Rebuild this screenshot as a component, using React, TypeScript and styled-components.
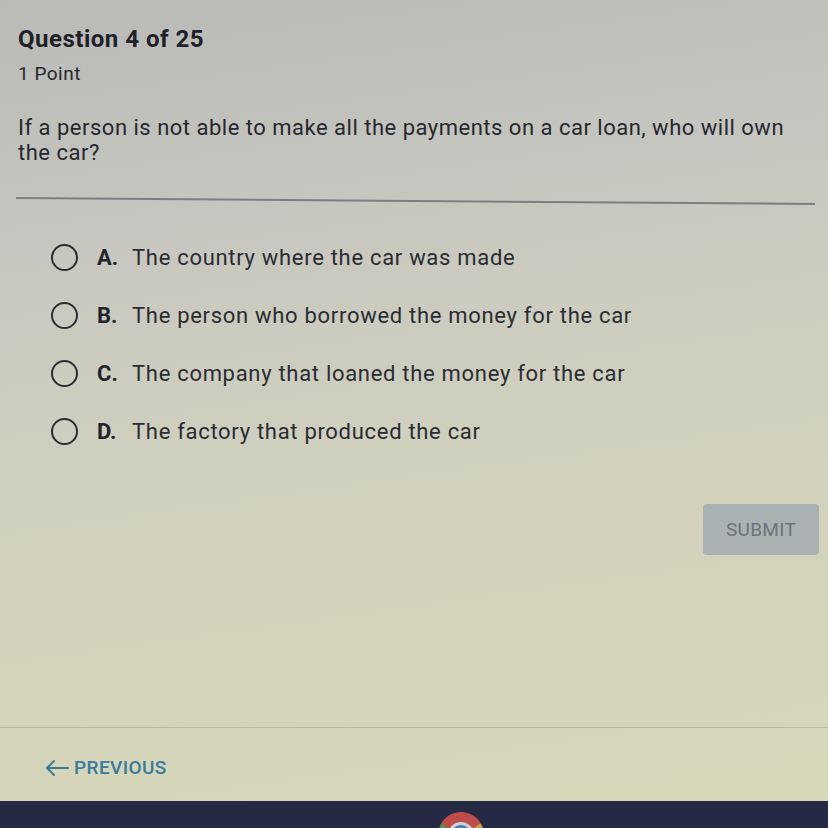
import React from 'react'
import styled, { createGlobalStyle } from 'styled-components'

const GlobalStyle = createGlobalStyle`
    html, body {
        margin: 0;
        padding: 0;
    }
    body {
        font-family: Roboto, "Liberation Sans", Arial, sans-serif;
        color: #24262c;
    }
`

const Screen = styled.div`
    width: 828px;
    height: 828px;
    overflow: hidden;
    display: flex;
    flex-direction: column;
    background: linear-gradient(172deg, #b9b9b6 0%, #c6c6c0 25%, #cfcfbf 50%, #d5d5bb 80%, #d7d7b9 100%);
`

const Header = styled.div`
    padding: 25px 0 0 18px;
`

const Title = styled.div`
    font-size: 24px;
    font-weight: 700;
    line-height: 28px;
    letter-spacing: 0.5px;
    color: #1f2129;
`

const Points = styled.div`
    margin-top: 10px;
    font-size: 19px;
    line-height: 22px;
    letter-spacing: 0.5px;
`

const QuestionText = styled.div`
    margin-top: 30px;
    width: 790px;
    font-size: 22px;
    line-height: 25px;
    letter-spacing: 0.5px;
    color: #26282e;
`

const Divider = styled.div`
    margin: 32px 13px 0 16px;
    height: 0;
    border-top: 2px solid #7c7e80;
    transform: rotate(0.43deg);
    transform-origin: left center;
`

const Options = styled.div`
    display: flex;
    flex-direction: column;
    gap: 30px;
    padding: 44px 0 0 51px;
`

const Option = styled.div`
    display: flex;
    align-items: center;
    height: 28px;
    font-size: 22px;
    letter-spacing: 0.7px;
    color: #2a2c32;
`

const Radio = styled.span`
    width: 23px;
    height: 23px;
    border: 2.5px solid #2b2d33;
    border-radius: 50%;
    flex-shrink: 0;
`

const Letter = styled.span`
    margin-left: 19px;
    width: 35px;
    font-weight: 700;
    letter-spacing: 0;
    color: #22242a;
`

const SubmitRow = styled.div`
    display: flex;
    justify-content: flex-end;
    padding: 59px 9px 0 0;
`

const SubmitButton = styled.button`
    width: 116px;
    height: 51px;
    border: none;
    border-radius: 4px;
    background: #a9b1b3;
    color: #6b737b;
    font-family: Roboto, "Liberation Sans", Arial, sans-serif;
    font-size: 19px;
    letter-spacing: 0.3px;
`

const Spacer = styled.div`
    flex: 1;
`

const FooterRule = styled.div`
    border-top: 1px solid rgba(150, 150, 135, 0.45);
`

const Footer = styled.div`
    height: 67px;
    padding: 6px 0 0 44px;
    display: flex;
    align-items: center;
`

const PrevLink = styled.a`
    display: flex;
    align-items: center;
    gap: 4px;
    color: #3a7a9c;
    font-size: 19px;
    font-weight: 500;
    letter-spacing: 0.4px;
    cursor: pointer;
`

const Taskbar = styled.div`
    position: relative;
    height: 27px;
    background: #262944;
`

const ChromeIcon = styled.div`
    position: absolute;
    left: 438px;
    top: 11px;
    width: 46px;
    height: 46px;
    border-radius: 50%;
    background: conic-gradient(from -60deg, #d9534a 0deg 120deg, #e3b94a 120deg 240deg, #5aa05a 240deg 360deg);
    opacity: 0.85;

    &::after {
        content: '';
        position: absolute;
        left: 13px;
        top: 13px;
        width: 20px;
        height: 20px;
        border-radius: 50%;
        background: #4d86c8;
        box-shadow: 0 0 0 3px #eeeeee;
    }
`

const options = [
    { letter: 'A.', text: 'The country where the car was made' },
    { letter: 'B.', text: 'The person who borrowed the money for the car' },
    { letter: 'C.', text: 'The company that loaned the money for the car' },
    { letter: 'D.', text: 'The factory that produced the car' },
]

export default function App() {
    return (
        <>
            <GlobalStyle />
            <Screen>
                <Header>
                    <Title>Question 4 of 25</Title>
                    <Points>1 Point</Points>
                    <QuestionText>
                        If a person is not able to make all the payments on a car loan, who will own the car?
                    </QuestionText>
                </Header>
                <Divider />
                <Options>
                    {options.map((o) => (
                        <Option key={o.letter}>
                            <Radio />
                            <Letter>{o.letter}</Letter>
                            <span>{o.text}</span>
                        </Option>
                    ))}
                </Options>
                <SubmitRow>
                    <SubmitButton>SUBMIT</SubmitButton>
                </SubmitRow>
                <Spacer />
                <FooterRule />
                <Footer>
                    <PrevLink>
                        <svg width="26" height="20" viewBox="0 0 26 20" fill="none" stroke="currentColor" strokeWidth="2" strokeLinecap="round" strokeLinejoin="round">
                            <path d="M24 10H3" />
                            <path d="M10 3L3 10l7 7" />
                        </svg>
                        PREVIOUS
                    </PrevLink>
                </Footer>
                <Taskbar>
                    <ChromeIcon />
                </Taskbar>
            </Screen>
        </>
    )
}
